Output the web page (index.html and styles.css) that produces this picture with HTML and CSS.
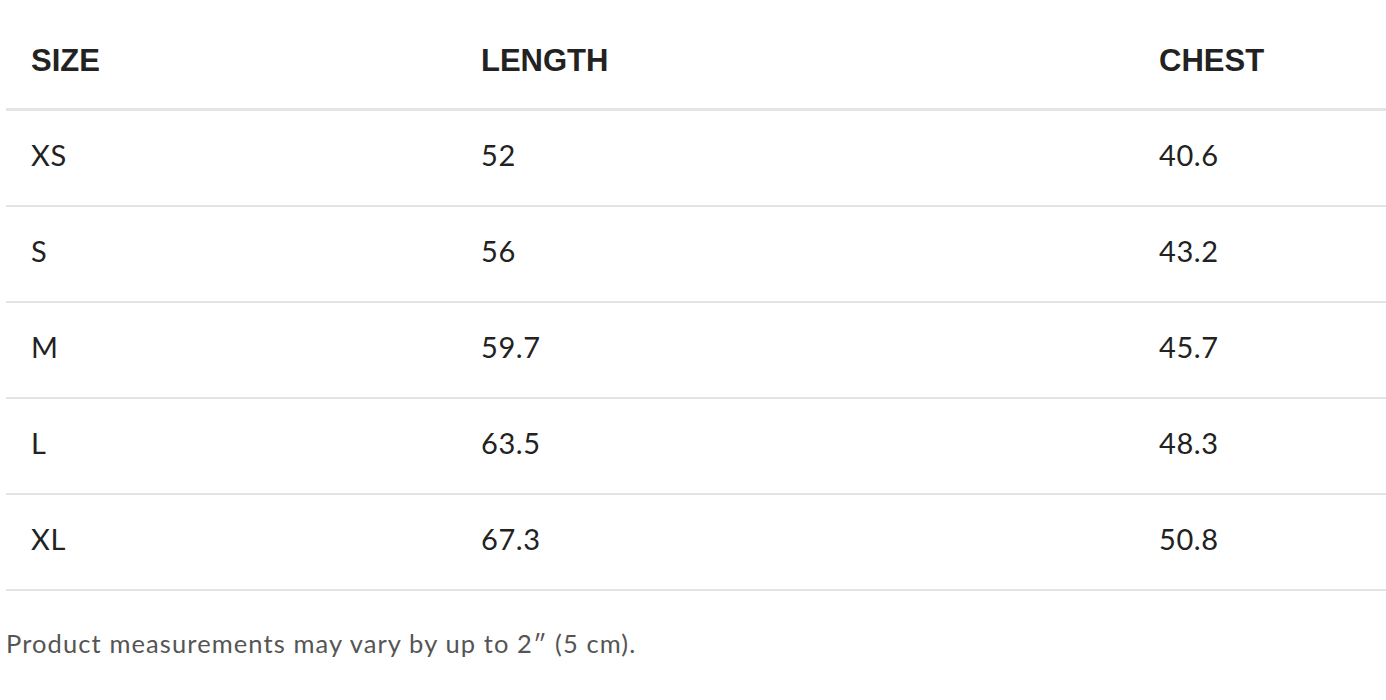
FILE: index.html
```html
<!DOCTYPE html>
<html>
<head>
<meta charset="utf-8">
<link rel="stylesheet" href="styles.css">
</head>
<body>
<div class="chart">
  <div class="row head">
    <div class="cell">SIZE</div>
    <div class="cell">LENGTH</div>
    <div class="cell">CHEST</div>
  </div>
  <div class="row">
    <div class="cell">XS</div>
    <div class="cell">52</div>
    <div class="cell">40.6</div>
  </div>
  <div class="row">
    <div class="cell">S</div>
    <div class="cell">56</div>
    <div class="cell">43.2</div>
  </div>
  <div class="row">
    <div class="cell">M</div>
    <div class="cell">59.7</div>
    <div class="cell">45.7</div>
  </div>
  <div class="row">
    <div class="cell">L</div>
    <div class="cell">63.5</div>
    <div class="cell">48.3</div>
  </div>
  <div class="row">
    <div class="cell">XL</div>
    <div class="cell">67.3</div>
    <div class="cell">50.8</div>
  </div>
  <p class="note">Product measurements may vary by up to 2″ (5 cm).</p>
</div>
</body>
</html>
```
FILE: styles.css
```css
html, body {
  margin: 0;
  padding: 0;
  background: #ffffff;
}
.chart {
  padding-left: 6px;
  font-family: "Lato", "Open Sans", sans-serif;
  color: #222222;
}
.row {
  display: grid;
  grid-template-columns: 450px 678px 1fr;
  align-items: center;
  height: 96px;
  box-sizing: border-box;
  border-bottom: 2px solid #e4e4e4;
  padding-bottom: 7px;
  font-size: 29px;
  letter-spacing: 0.6px;
}
.row.head {
  height: 111px;
  border-bottom: 3px solid #e4e4e4;
  padding-top: 14px;
  padding-bottom: 0;
  font-family: "Liberation Sans", Arial, sans-serif;
  font-weight: 700;
  font-size: 31px;
  letter-spacing: 0;
}
.cell {
  padding-left: 25px;
}
.note {
  margin: 37px 0 0;
  font-size: 25.5px;
  letter-spacing: 1.1px;
  color: #555555;
}
```
